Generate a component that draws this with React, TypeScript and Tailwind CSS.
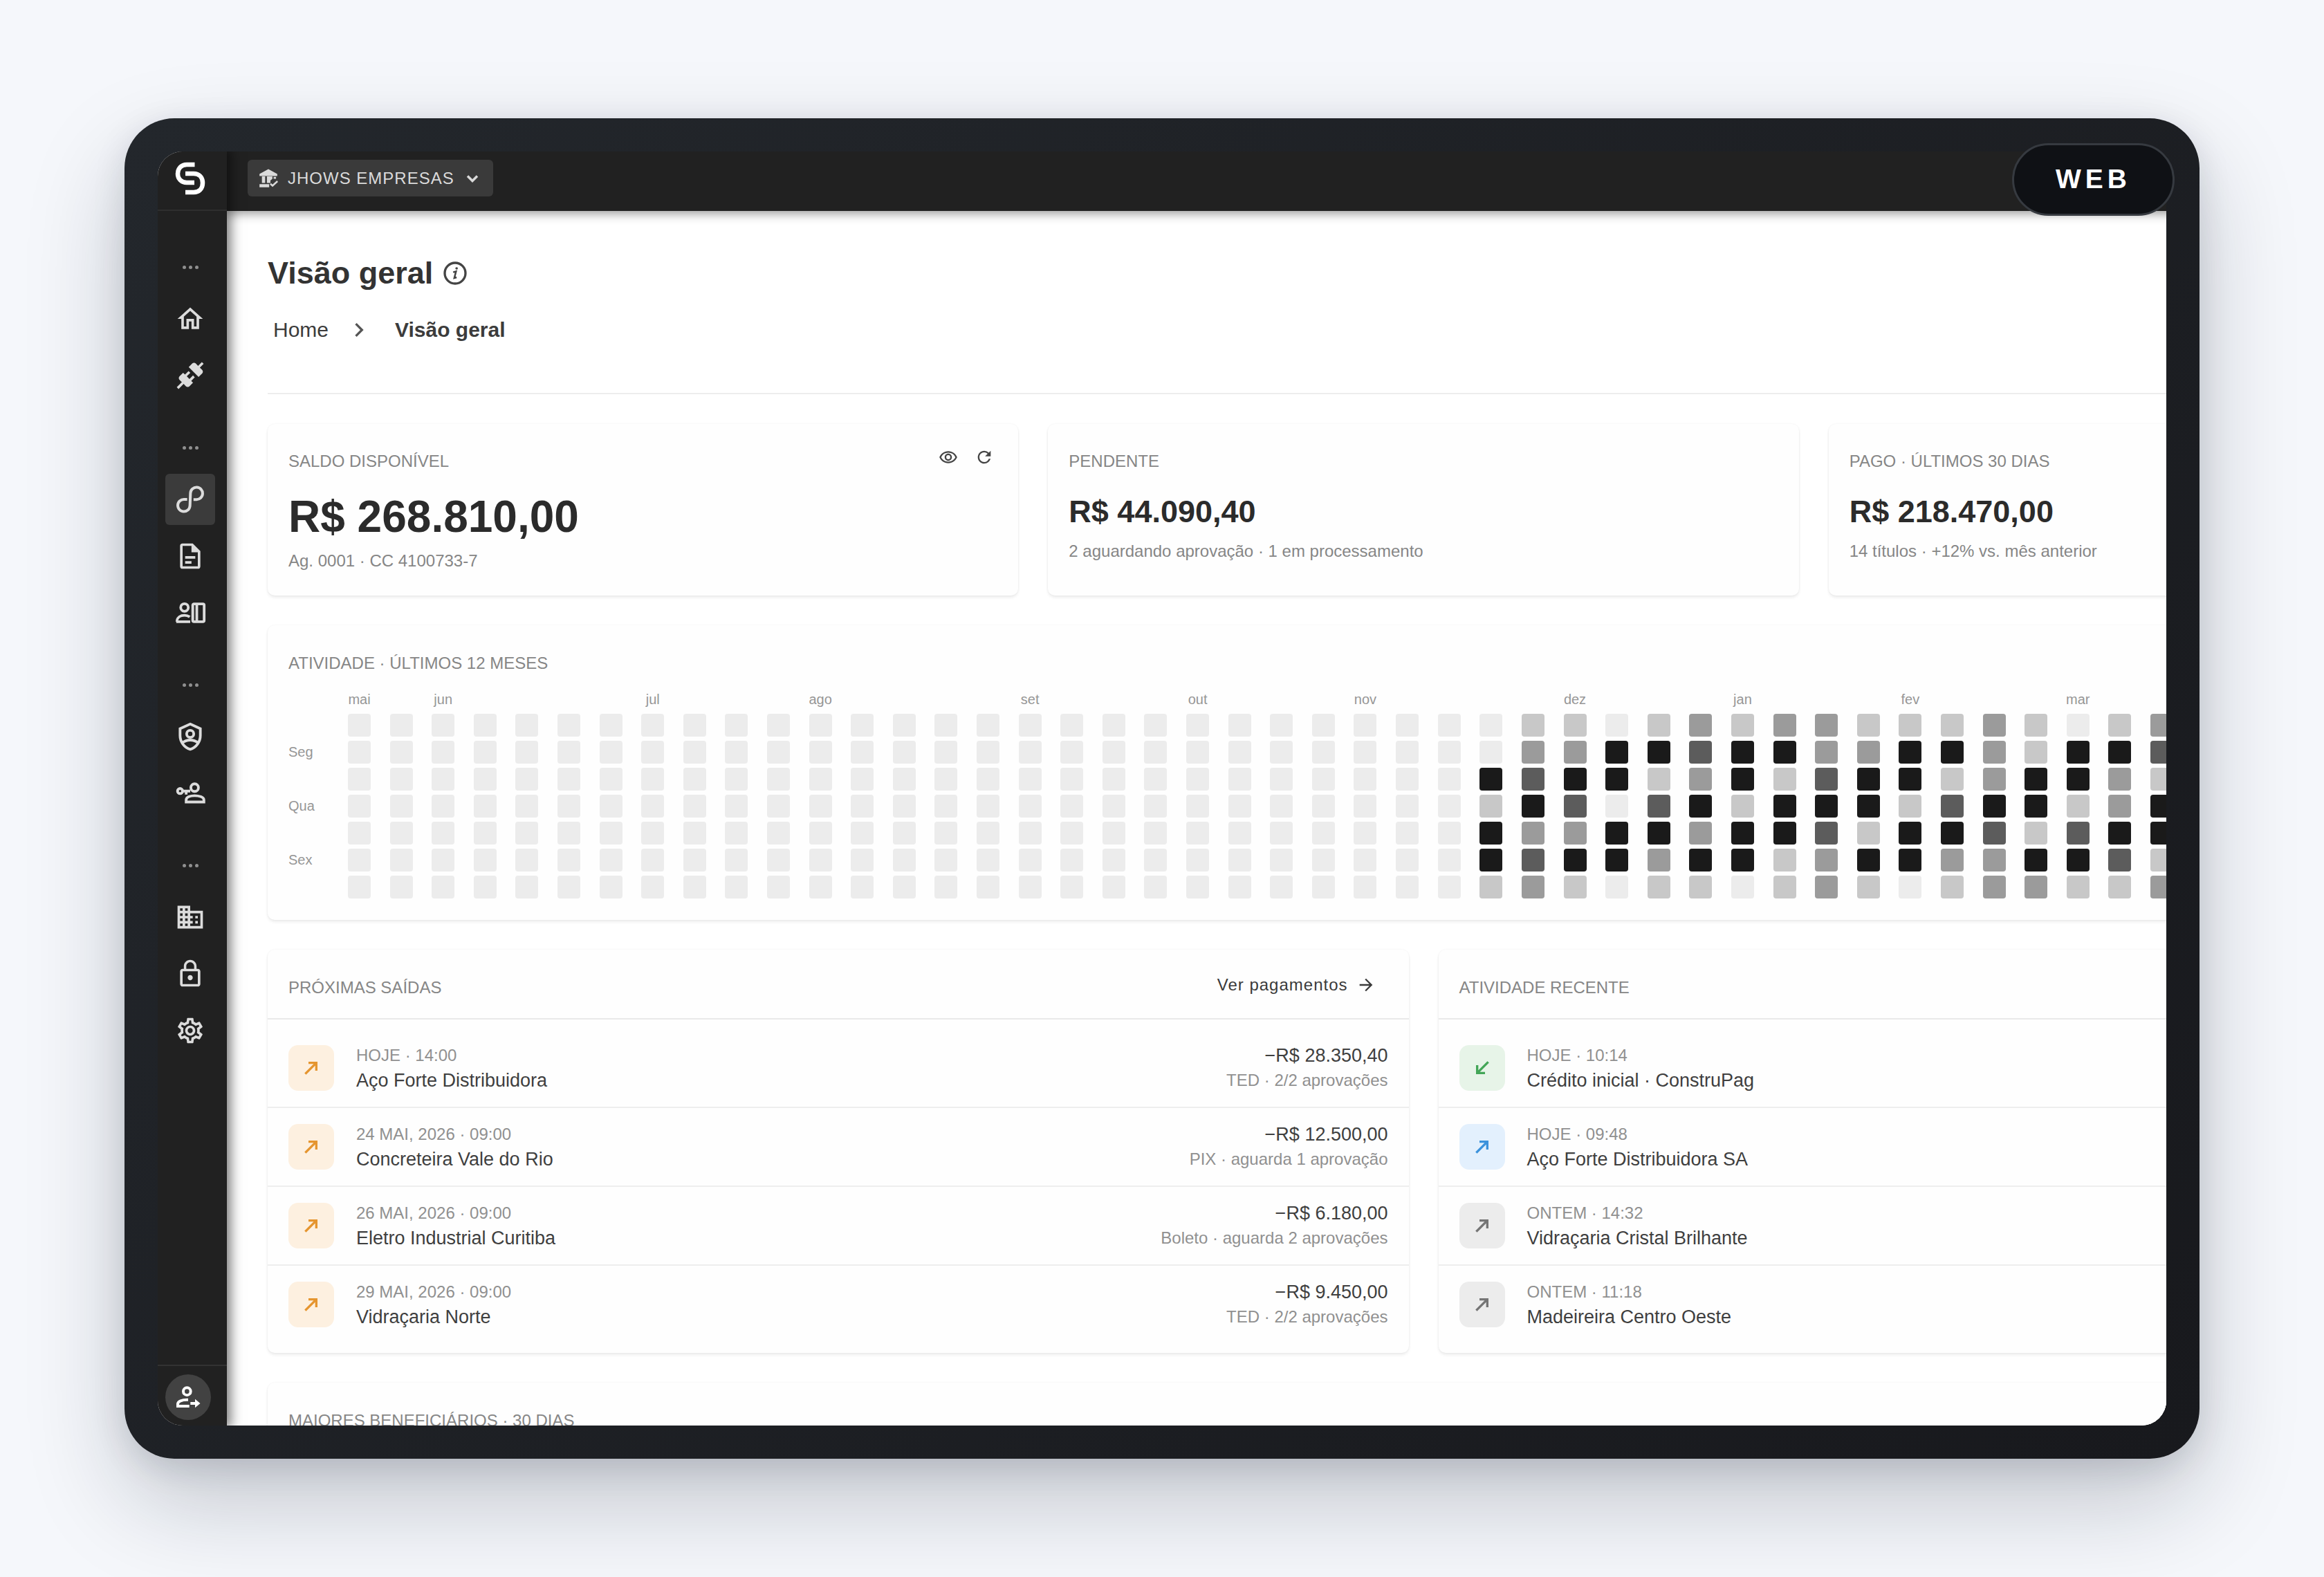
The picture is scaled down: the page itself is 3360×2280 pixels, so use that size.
import React, { useState } from 'react';
import { MdArrowForward, MdBusiness, MdChevronRight, MdLockOutline, MdOutlineRemoveRedEye, MdOutlineSettings, MdRefresh } from 'react-icons/md';

type Tone = 'orange' | 'green' | 'blue' | 'gray';

interface Movement {
  when: string;
  name: string;
  tone: Tone;
  incoming?: boolean;
  amount?: string;
  detail?: string;
}

const payments: Movement[] = [
  { when: 'HOJE · 14:00', name: 'Aço Forte Distribuidora', tone: 'orange', amount: '−R$ 28.350,40', detail: 'TED · 2/2 aprovações' },
  { when: '24 MAI, 2026 · 09:00', name: 'Concreteira Vale do Rio', tone: 'orange', amount: '−R$ 12.500,00', detail: 'PIX · aguarda 1 aprovação' },
  { when: '26 MAI, 2026 · 09:00', name: 'Eletro Industrial Curitiba', tone: 'orange', amount: '−R$ 6.180,00', detail: 'Boleto · aguarda 2 aprovações' },
  { when: '29 MAI, 2026 · 09:00', name: 'Vidraçaria Norte', tone: 'orange', amount: '−R$ 9.450,00', detail: 'TED · 2/2 aprovações' },
];

const recent: Movement[] = [
  { when: 'HOJE · 10:14', name: 'Crédito inicial · ConstruPag', tone: 'green', incoming: true },
  { when: 'HOJE · 09:48', name: 'Aço Forte Distribuidora SA', tone: 'blue' },
  { when: 'ONTEM · 14:32', name: 'Vidraçaria Cristal Brilhante', tone: 'gray' },
  { when: 'ONTEM · 11:18', name: 'Madeireira Centro Oeste', tone: 'gray' },
];

const toneClasses: Record<Tone, string> = {
  orange: 'bg-[#fdf0e0] text-[#e5952f]',
  green: 'bg-[#e7f4e8] text-[#43a657]',
  blue: 'bg-[#e3f0fd] text-[#3b92dc]',
  gray: 'bg-[#ececec] text-[#757575]',
};

const WEEKS = 53;
const FIRST_ACTIVE_WEEK = 27;

// one string per week, sunday to saturday, 0 (none) to 4 (busiest)
const activeWeeks = [
  '0041441', '1234232', '1243241', '0440440', '1413421', '2324241', '1441440', '2414411', '2234322',
  '1244141', '1441440', '1413421', '2224322', '1144142', '0441341', '1422431', '2314412',
];

const levelClasses = ['bg-[#ececec]', 'bg-[#c8c8c8]', 'bg-[#9b9b9b]', 'bg-[#5c5c5c]', 'bg-[#1a1a1a]'];

const months: Record<number, string> = {
  0: 'mai', 2: 'jun', 7: 'jul', 11: 'ago', 16: 'set', 20: 'out', 24: 'nov', 29: 'dez', 33: 'jan', 37: 'fev', 41: 'mar',
};

const weekdays = ['', 'Seg', '', 'Qua', '', 'Sex', ''];

const Glyph = ({ children, className = 'size-11' }: { children: React.ReactNode; className?: string }) => (
  <svg viewBox="0 0 24 24" fill="currentColor" aria-hidden="true" className={className}>
    {children}
  </svg>
);

const HomeIcon = () => (
  <Glyph>
    <path d="M12 5.69L17 10.19V18H15V12H9V18H7V10.19L12 5.69M12 3L2 12H5V20H11V14H13V20H19V12H22L12 3Z" />
  </Glyph>
);

const ConnectionIcon = () => (
  <Glyph>
    <path d="M21.4 7.5C22.2 8.3 22.2 9.6 21.4 10.3L18.6 13.1L10.8 5.3L13.6 2.5C14.4 1.7 15.7 1.7 16.4 2.5L18.2 4.3L21.2 1.3L22.6 2.7L19.6 5.7L21.4 7.5M15.6 13.3L14.2 11.9L11.4 14.7L9.3 12.6L12.1 9.8L10.7 8.4L7.9 11.2L6.4 9.8L3.6 12.6C2.8 13.4 2.8 14.7 3.6 15.4L5.4 17.2L1.4 21.2L2.8 22.6L6.8 18.6L8.6 20.4C9.4 21.2 10.7 21.2 11.4 20.4L14.2 17.6L12.8 16.2L15.6 13.3Z" />
  </Glyph>
);

const LoopIcon = () => (
  <Glyph>
    <path
      d="M9.6 12H7.2A4.8 4.8 0 1 0 11.8 17L12.2 7A4.8 4.8 0 1 1 16.9 12.1H14.6"
      fill="none"
      stroke="currentColor"
      strokeWidth="2.2"
    />
  </Glyph>
);

const DocumentIcon = () => (
  <Glyph>
    <path d="M6 2A2 2 0 0 0 4 4V20A2 2 0 0 0 6 22H18A2 2 0 0 0 20 20V8L14 2H6M6 4H13V9H18V20H6V4M8 12V14H16V12H8M8 16V18H13V16H8Z" />
  </Glyph>
);

const BeneficiaryIcon = () => (
  <Glyph className="h-11 w-12">
    <g fill="none" stroke="currentColor" strokeWidth="2.1">
      <circle cx="7.5" cy="7.8" r="3" />
      <path d="M1.5 19C1.5 15.4 4.6 14 7.5 14C9.2 14 10.6 14.5 11.6 15.2M1 19H12" />
      <rect x="14" y="5" width="9" height="14" rx="1" />
      <path d="M17.2 5V19" />
    </g>
  </Glyph>
);

const ShieldIcon = () => (
  <Glyph>
    <g fill="none" stroke="currentColor" strokeWidth="2.1">
      <path d="M12 2.1L20 5.7V11.2C20 16 16.7 20.7 12 22C7.3 20.7 4 16 4 11.2V5.7Z" />
      <circle cx="12" cy="9.8" r="2.8" />
      <path d="M5.8 17C7.4 15.4 9.6 14.7 12 14.7S16.6 15.4 18.2 17" />
    </g>
  </Glyph>
);

const AccountKeyIcon = () => (
  <Glyph className="h-11 w-12">
    <g fill="none" stroke="currentColor" strokeWidth="2.1">
      <circle cx="15.5" cy="7.5" r="3" />
      <path d="M8.8 18.8V17.2C8.8 14.9 12.2 13.8 15.5 13.8S22.8 14.9 22.8 17.2V18.8Z" />
      <circle cx="4" cy="10.2" r="2" />
      <path d="M6 10.2H12M8.8 10V13" />
    </g>
  </Glyph>
);

const AccountArrowIcon = () => (
  <Glyph className="size-10">
    <g fill="none" stroke="currentColor" strokeWidth="2.4">
      <circle cx="11" cy="7" r="3.2" />
      <path d="M13 19.8H3V18C3 15.6 6.8 14.2 11 14.2H12" />
    </g>
    <path d="M14 16.2H18V13.6L22.5 17.4L18 21.2V18.6H14Z" />
  </Glyph>
);

const BankIcon = () => (
  <Glyph className="size-7">
    <path d="M12 0.5L1 6.5V9H23V6.5L12 0.5M4 9.5V17.5H8V9.5H4M10.2 9.5V17.5H14.5V14.5L17 12.5V9.5H10.2M1 19V23H13V19H1M18.5 10V12.5H21.5V10H18.5M22.6 14.5L17.2 19.6L15.2 17.8L13.8 19.4L17.2 22.6L24 16.2Z" />
  </Glyph>
);

const ChevronDownIcon = () => (
  <svg viewBox="0 0 24 24" fill="none" stroke="currentColor" strokeWidth="3" aria-hidden="true" className="size-7">
    <path d="M6 9L12 15L18 9" />
  </svg>
);

const InfoIcon = () => (
  <svg viewBox="0 0 24 24" fill="none" stroke="currentColor" strokeWidth="2" aria-hidden="true" className="size-10">
    <circle cx="12" cy="12" r="9" />
    <path d="M10.3 11.2L12.8 10.4L11.3 16.2L13.3 15.6" strokeWidth="1.5" />
    <circle cx="13.3" cy="7.8" r="1.1" fill="currentColor" stroke="none" />
  </svg>
);

const DirectionIcon = ({ incoming }: { incoming?: boolean }) => (
  <svg viewBox="0 0 24 24" fill="none" stroke="currentColor" strokeWidth="2.5" aria-hidden="true" className="size-8">
    {incoming ? <path d="M18.5 5.5L6.5 17.5M6.5 9V17.5H15" /> : <path d="M5.5 18.5L17.5 6.5M9 6.5H17.5V15" />}
  </svg>
);

const Logo = () => (
  <svg viewBox="0 0 44 48" fill="none" stroke="currentColor" strokeWidth="6.5" aria-hidden="true" className="h-12 w-11">
    <path d="M28.5 4H17C9 4 4 9.5 4 17S9 30 17 30H28" />
    <path d="M15 17H27C35 17 40 22.5 40 30.5S35 44 27 44H15" />
  </svg>
);

const navGroups = [
  [
    { label: 'Início', icon: <HomeIcon /> },
    { label: 'Conexões', icon: <ConnectionIcon /> },
  ],
  [
    { label: 'Visão geral', icon: <LoopIcon /> },
    { label: 'Documentos', icon: <DocumentIcon /> },
    { label: 'Beneficiários', icon: <BeneficiaryIcon /> },
  ],
  [
    { label: 'Segurança', icon: <ShieldIcon /> },
    { label: 'Acessos', icon: <AccountKeyIcon /> },
  ],
  [
    { label: 'Empresa', icon: <MdBusiness className="size-11" /> },
    { label: 'Privacidade', icon: <MdLockOutline className="size-11" /> },
    { label: 'Configurações', icon: <MdOutlineSettings className="size-11" /> },
  ],
];

function Sidebar() {
  const [active, setActive] = useState('Visão geral');

  return (
    <aside className="relative z-20 flex w-[100px] shrink-0 flex-col bg-[#212121] text-[#dcdcdc] shadow-[2px_0_16px_4px_rgba(0,0,0,0.5)]">
      <div className="flex h-[86px] items-center justify-center border-b-2 border-[#2e2e2e] pr-1.5 pb-1.5 text-white">
        <Logo />
      </div>
      <nav className="flex flex-1 flex-col gap-[57px] pt-[71px] pr-1.5">
        {navGroups.map((group, index) => (
          <div key={index} className="flex flex-col items-center gap-2">
            <div className="flex h-6 items-center gap-1 pb-1">
              <span className="size-[5px] rounded-full bg-[#8f8f8f]"></span>
              <span className="size-[5px] rounded-full bg-[#8f8f8f]"></span>
              <span className="size-[5px] rounded-full bg-[#8f8f8f]"></span>
            </div>
            {group.map((item, i) => (
              <button
                key={item.label}
                aria-label={item.label}
                onClick={() => setActive(item.label)}
                className={`flex h-[74px] w-[72px] items-center justify-center rounded-md ${i === 0 ? 'mt-4' : ''} ${
                  active === item.label ? 'bg-[#3b3b3b]' : ''
                }`}
              >
                {item.icon}
              </button>
            ))}
          </div>
        ))}
      </nav>
      <div className="flex justify-center border-t-2 border-[#333333] pt-3 pr-3 pb-2">
        <button aria-label="Conta" className="flex size-[66px] items-center justify-center rounded-full bg-[#424242] text-white">
          <AccountArrowIcon />
        </button>
      </div>
    </aside>
  );
}

const Card = ({ children, className = '' }: { children: React.ReactNode; className?: string }) => (
  <section className={`rounded-[10px] bg-[#fefefe] shadow-[0_3px_4px_rgba(0,0,0,0.07),0_0_3px_rgba(0,0,0,0.06)] ${className}`}>
    {children}
  </section>
);

const CardLabel = ({ children }: { children: React.ReactNode }) => (
  <h2 className="text-[24px] leading-7 text-[#868686]">{children}</h2>
);

function Summary() {
  return (
    <div className="mt-[43px] grid grid-cols-3 gap-[43px]">
      <Card className="px-[30px] pt-10 pb-9">
        <div className="flex items-start justify-between">
          <CardLabel>SALDO DISPONÍVEL</CardLabel>
          <div className="-mt-1.5 mr-[5px] flex gap-6 text-[#444444]">
            <button aria-label="Ocultar saldo">
              <MdOutlineRemoveRedEye className="size-7" />
            </button>
            <button aria-label="Atualizar saldo">
              <MdRefresh className="size-7" />
            </button>
          </div>
        </div>
        <p className="mt-7 text-[64px] leading-[76px] font-bold text-[#2b2b2b]">R$ 268.810,00</p>
        <p className="mt-3 text-[24px] leading-7 text-[#868686]">Ag. 0001 · CC 4100733-7</p>
      </Card>
      <Card className="px-[30px] pt-10">
        <CardLabel>PENDENTE</CardLabel>
        <p className="mt-8 text-[45px] leading-[54px] font-bold text-[#2b2b2b]">R$ 44.090,40</p>
        <p className="mt-4 text-[24px] leading-7 text-[#868686]">2 aguardando aprovação · 1 em processamento</p>
      </Card>
      <Card className="px-[30px] pt-10">
        <CardLabel>PAGO · ÚLTIMOS 30 DIAS</CardLabel>
        <p className="mt-8 text-[45px] leading-[54px] font-bold text-[#2b2b2b]">R$ 218.470,00</p>
        <p className="mt-4 text-[24px] leading-7 text-[#868686]">14 títulos · +12% vs. mês anterior</p>
      </Card>
    </div>
  );
}

function ActivityMap() {
  const weeks = Array.from({ length: WEEKS }, (_, i) => activeWeeks[i - FIRST_ACTIVE_WEEK] ?? '0000000');

  return (
    <Card className="mt-[43px] px-[30px] pt-[41px] pb-[31px]">
      <CardLabel>ATIVIDADE · ÚLTIMOS 12 MESES</CardLabel>
      <div className="mt-[26px] flex text-[20px] text-[#969696]">
        <div className="flex w-[86px] shrink-0 flex-col gap-1.5 pt-[33px]">
          {weekdays.map((day, i) => (
            <span key={i} className="h-[33px] leading-[33px]">
              {day}
            </span>
          ))}
        </div>
        <div className="grid flex-1 grid-cols-[repeat(53,minmax(0,1fr))] gap-x-4">
          {weeks.map((week, w) => (
            <div key={w} className="flex w-[33px] flex-col items-center gap-1.5">
              <span className="mb-[3px] h-6 leading-6">{months[w]}</span>
              {week.split('').map((level, d) => (
                <span key={d} className={`size-[33px] rounded-[4px] ${levelClasses[Number(level)]}`}></span>
              ))}
            </div>
          ))}
        </div>
      </div>
    </Card>
  );
}

function MovementCard({ title, items, action }: { title: string; items: Movement[]; action?: React.ReactNode }) {
  return (
    <Card>
      <div className="flex items-start justify-between border-b-2 border-[#e9e9e9] px-[30px] pt-[41px] pb-[30px]">
        <CardLabel>{title}</CardLabel>
        {action}
      </div>
      <ul className="divide-y-2 divide-[#eeeeee] py-3.5">
        {items.map((item) => (
          <li key={item.when} className="flex h-[114px] items-center gap-8 px-[30px] last:h-28">
            <span className={`flex size-[66px] items-center justify-center rounded-[14px] ${toneClasses[item.tone]}`}>
              <DirectionIcon incoming={item.incoming} />
            </span>
            <div className="flex-1 pt-1">
              <p className="text-[24px] leading-8 text-[#909090]">{item.when}</p>
              <p className="text-[27px] leading-10 text-[#3f3f3f]">{item.name}</p>
            </div>
            {item.amount && (
              <div className="pt-1 text-right">
                <p className="text-[27px] leading-8 text-[#3f3f3f]">{item.amount}</p>
                <p className="text-[24px] leading-10 text-[#909090]">{item.detail}</p>
              </div>
            )}
          </li>
        ))}
      </ul>
    </Card>
  );
}

function Overview() {
  return (
    <main className="flex-1 bg-white px-[59px] pt-[63px]">
      <div className="flex items-center gap-3">
        <h1 className="text-[45px] leading-[54px] font-bold text-[#333333]">Visão geral</h1>
        <span className="text-[#444444]">
          <InfoIcon />
        </span>
      </div>
      <nav aria-label="Trilha" className="mt-[37px] flex h-9 items-center pl-2 text-[30px] leading-9 text-[#3c3c3c]">
        <a href="#home">Home</a>
        <MdChevronRight className="mr-8 ml-6 size-10 text-[#555555]" />
        <span className="font-bold">Visão geral</span>
      </nav>
      <hr className="mt-[73px] border-t-2 border-[#ededed]" />
      <Summary />
      <ActivityMap />
      <div className="mt-[43px] grid grid-cols-2 gap-[43px]">
        <MovementCard
          title="PRÓXIMAS SAÍDAS"
          items={payments}
          action={
            <button className="-mt-1 mr-[18px] flex items-center gap-3 text-[24px] leading-7 tracking-[1px] text-[#3a3a3a]">
              Ver pagamentos
              <MdArrowForward className="size-7" />
            </button>
          }
        />
        <MovementCard title="ATIVIDADE RECENTE" items={recent} />
      </div>
      <Card className="mt-[43px] px-[30px] pt-[41px] pb-[35px]">
        <CardLabel>MAIORES BENEFICIÁRIOS · 30 DIAS</CardLabel>
      </Card>
    </main>
  );
}

function App() {
  return (
    <div className="flex min-h-screen items-center bg-[#f5f7fb] px-[180px] py-[171px] font-['Liberation_Sans',Arial,sans-serif]">
      <div className="relative w-full rounded-[72px] bg-linear-135 from-[#23272c] to-[#18191d] p-12 shadow-[0_60px_140px_rgba(15,23,42,0.22),0_12px_48px_rgba(15,23,42,0.12)]">
        <div className="isolate aspect-[2904/1842] overflow-hidden rounded-[36px] bg-white">
          <div className="flex h-full min-w-[3560px]">
            <Sidebar />
            <div className="flex min-w-0 flex-1 flex-col">
              <header className="relative z-10 flex h-[86px] shrink-0 items-start bg-[#212121] px-[30px] pt-3 shadow-[0_2px_14px_2px_rgba(0,0,0,0.4)]">
                <button className="flex h-[53px] items-center rounded-md bg-[#3a3a3a] px-4 text-[24px] tracking-[1px] text-[#dadada]">
                  <BankIcon />
                  <span className="mr-3 ml-3.5">JHOWS EMPRESAS</span>
                  <ChevronDownIcon />
                </button>
              </header>
              <Overview />
            </div>
          </div>
        </div>
        <span className="absolute top-9 right-9 z-30 flex h-[105px] items-center rounded-full border-3 border-[#363a40] bg-[#0f1115] px-[60px] text-[39px] font-bold tracking-[6px] text-white">
          WEB
        </span>
      </div>
    </div>
  );
}

export default App;
